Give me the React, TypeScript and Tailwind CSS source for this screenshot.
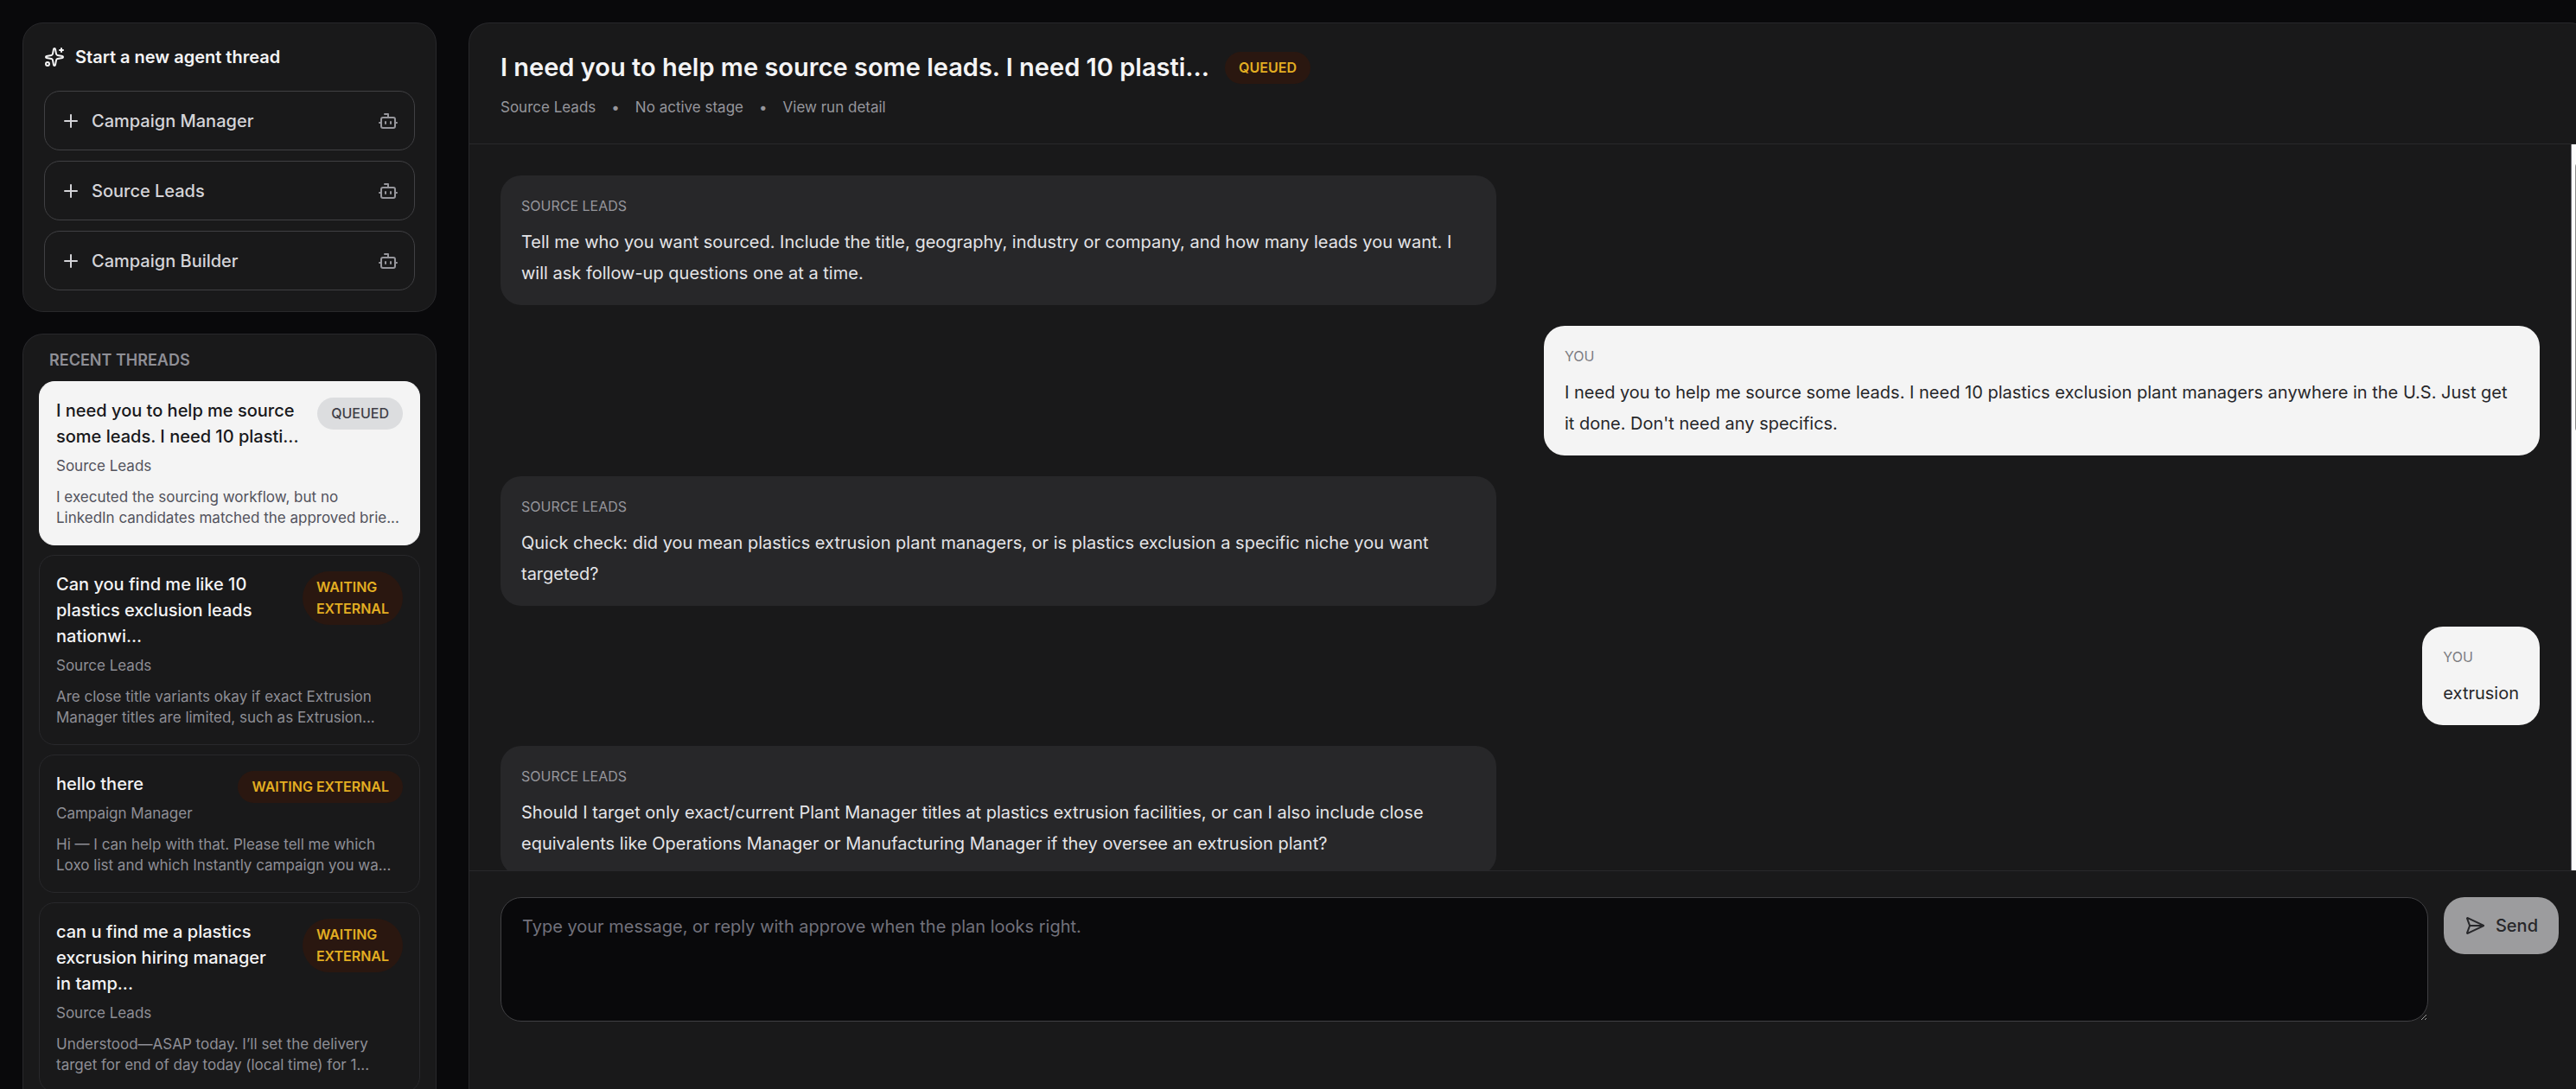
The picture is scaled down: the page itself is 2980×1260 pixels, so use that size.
import { Bot, Plus, SendHorizontal, Sparkles } from 'lucide-react';
import clsx from 'clsx';

type Thread = {
  title: string;
  agent: string;
  status: string;
  preview: string;
  active?: boolean;
};

type Message = {
  from: 'agent' | 'user';
  text: string;
};

const agents = ['Campaign Manager', 'Source Leads', 'Campaign Builder'];

const threads: Thread[] = [
  {
    title: 'I need you to help me source some leads. I need 10 plasti...',
    agent: 'Source Leads',
    status: 'Queued',
    preview: 'I executed the sourcing workflow, but no LinkedIn\u00a0candidates matched the approved brie...',
    active: true,
  },
  {
    title: 'Can you find me like 10 plastics exclusion leads nationwi...',
    agent: 'Source Leads',
    status: 'Waiting external',
    preview: 'Are close title variants okay if exact Extrusion Manager titles are limited, such as Extrusion...',
  },
  {
    title: 'hello there',
    agent: 'Campaign Manager',
    status: 'Waiting external',
    preview: 'Hi — I can help with that. Please tell me which Loxo list and which Instantly campaign you wa...',
  },
  {
    title: 'can u find me a plastics excrusion hiring manager in\u00a0tamp...',
    agent: 'Source Leads',
    status: 'Waiting external',
    preview: 'Understood—ASAP today. I’ll set the delivery target for end of day today (local time) for 1...',
  },
];

const messages: Message[] = [
  {
    from: 'agent',
    text: 'Tell me who you want sourced. Include the title, geography, industry or company, and how many leads you want. I will ask follow-up questions one at a time.',
  },
  {
    from: 'user',
    text: "I need you to help me source some leads. I need 10 plastics exclusion plant managers anywhere in the U.S. Just get it done. Don't need any specifics.",
  },
  {
    from: 'agent',
    text: 'Quick check: did you mean plastics extrusion plant managers, or is plastics exclusion a specific niche you want targeted?',
  },
  { from: 'user', text: 'extrusion' },
  {
    from: 'agent',
    text: 'Should I target only exact/current Plant Manager titles at plastics extrusion facilities, or can I also include close equivalents like Operations Manager or Manufacturing Manager if they oversee an extrusion plant?',
  },
];

function StatusBadge({ label, muted }: { label: string; muted?: boolean }) {
  return (
    <span
      className={clsx(
        'rounded-full px-4 py-[6px] text-[16px] leading-[25px] uppercase',
        muted ? 'bg-[#dcdddf] font-medium text-zinc-700' : 'bg-[#2a1710] font-semibold text-[#e3ae22]',
      )}
    >
      {label}
    </span>
  );
}

function ThreadCard({ thread }: { thread: Thread }) {
  const { title, agent, status, preview, active } = thread;

  return (
    <button
      type="button"
      className={clsx(
        'block w-full rounded-[18px] border px-[19px] pt-[18px] pb-[19px] text-left',
        active ? 'border-zinc-100 bg-[#f4f4f4] text-zinc-900' : 'border-[#28282b] text-zinc-100',
      )}
    >
      <div className="flex items-start justify-between gap-3">
        <div>
          <p className="text-[20px] leading-[30px] font-medium">{title}</p>
          <p className={clsx('mt-[7px] text-[17px] leading-6', active ? 'text-zinc-600' : 'text-[#8f8f96]')}>
            {agent}
          </p>
        </div>
        <StatusBadge label={status} muted={active} />
      </div>
      <p className={clsx('mt-3 text-[17px] leading-6', active ? 'text-zinc-600' : 'text-[#8f8f96]')}>
        {preview}
      </p>
    </button>
  );
}

function Bubble({ message }: { message: Message }) {
  const isUser = message.from === 'user';

  return (
    <div
      className={clsx(
        'max-w-[1152px] rounded-3xl px-6 pt-[17px] pb-[19px]',
        isUser ? 'self-end bg-[#f4f4f4] text-zinc-800' : 'self-start bg-[#272729] text-zinc-200',
      )}
    >
      <p className={clsx('mb-[6px] text-[16px] leading-9 uppercase', isUser ? 'text-[#7c7c82]' : 'text-[#96969c]')}>
        {isUser ? 'You' : 'Source Leads'}
      </p>
      <p className="text-[20px] leading-9">{message.text}</p>
    </div>
  );
}

export default function App() {
  return (
    <div className="flex h-screen gap-[37px] overflow-hidden bg-[#09090b] pt-[26px] pl-[26px] font-['Inter','Liberation_Sans',sans-serif] text-zinc-100">
      {/* Sidebar */}
      <aside className="flex w-[479px] shrink-0 flex-col gap-[25px]">
        <section className="shrink-0 rounded-3xl border border-[#28282b] bg-[#19191a] p-6">
          <h2 className="mb-6 flex items-center gap-3 text-[20px] leading-[30px] font-semibold">
            <Sparkles size={24} />
            Start a new agent thread
          </h2>
          <div className="flex flex-col gap-3">
            {agents.map((agent) => (
              <button
                key={agent}
                type="button"
                className="flex h-[69px] items-center gap-3 rounded-[18px] border border-[#404043] px-[18px] text-[20px] font-medium text-zinc-300"
              >
                <Plus size={24} />
                <span>{agent}</span>
                <Bot size={24} className="ml-auto text-[#96969c]" />
              </button>
            ))}
          </div>
        </section>

        <section className="min-h-0 flex-1 overflow-hidden rounded-t-3xl border border-b-0 border-[#28282b] bg-[#19191a] px-[18px] pt-[18px]">
          <h2 className="mb-3 px-3 text-[18px] leading-6 font-semibold text-[#8f8f96] uppercase">
            Recent threads
          </h2>
          <div className="flex flex-col gap-[11px]">
            {threads.map((thread) => (
              <ThreadCard key={thread.title} thread={thread} />
            ))}
          </div>
        </section>
      </aside>

      {/* Conversation, runs a little past the right edge of the window */}
      <main className="-mr-[17px] flex min-w-0 flex-1 flex-col rounded-t-3xl border border-b-0 border-[#28282b] bg-[#19191a]">
        <header className="border-b border-[#28282b] px-9 py-[30px]">
          <div className="flex items-center gap-[18px]">
            <h1 className="text-[29px] leading-[42px] font-semibold">
              I need you to help me source some leads. I need 10 plasti...
            </h1>
            <StatusBadge label="Queued" />
          </div>
          <div className="mt-[13px] flex gap-[18px] text-[17px] leading-6 text-[#96969c]">
            <span>Source Leads</span>
            <span>•</span>
            <span>No active stage</span>
            <span>•</span>
            <a href="#run">View run detail</a>
          </div>
        </header>

        <div className="flex min-h-0 flex-1 overflow-hidden">
          <div className="flex flex-1 flex-col gap-6 p-9">
            {messages.map((message) => (
              <Bubble key={message.text} message={message} />
            ))}
          </div>
          <div className="w-[22px] shrink-0 border-l border-zinc-500 bg-[#fcfcfc] pt-5 pl-1">
            <div className="h-[314px] w-3 rounded-full bg-[#8b8b8b]" />
          </div>
        </div>

        <form className="flex items-start gap-[18px] border-t border-[#28282b] px-9 pt-[30px] pb-[78px]">
          <textarea
            aria-label="Message"
            placeholder="Type your message, or reply with approve when the plan looks right."
            className="block h-36 flex-1 resize-y rounded-3xl border border-[#404043] bg-[#09090b] px-6 py-[18px] text-[20px] leading-[30px] placeholder:text-zinc-500"
          />
          <button
            type="button"
            disabled
            className="flex h-[66px] items-center gap-3 rounded-3xl bg-[#9c9c9e] px-6 text-[20px] font-medium text-[#27272a]"
          >
            <SendHorizontal size={24} />
            Send
          </button>
        </form>
      </main>
    </div>
  );
}
